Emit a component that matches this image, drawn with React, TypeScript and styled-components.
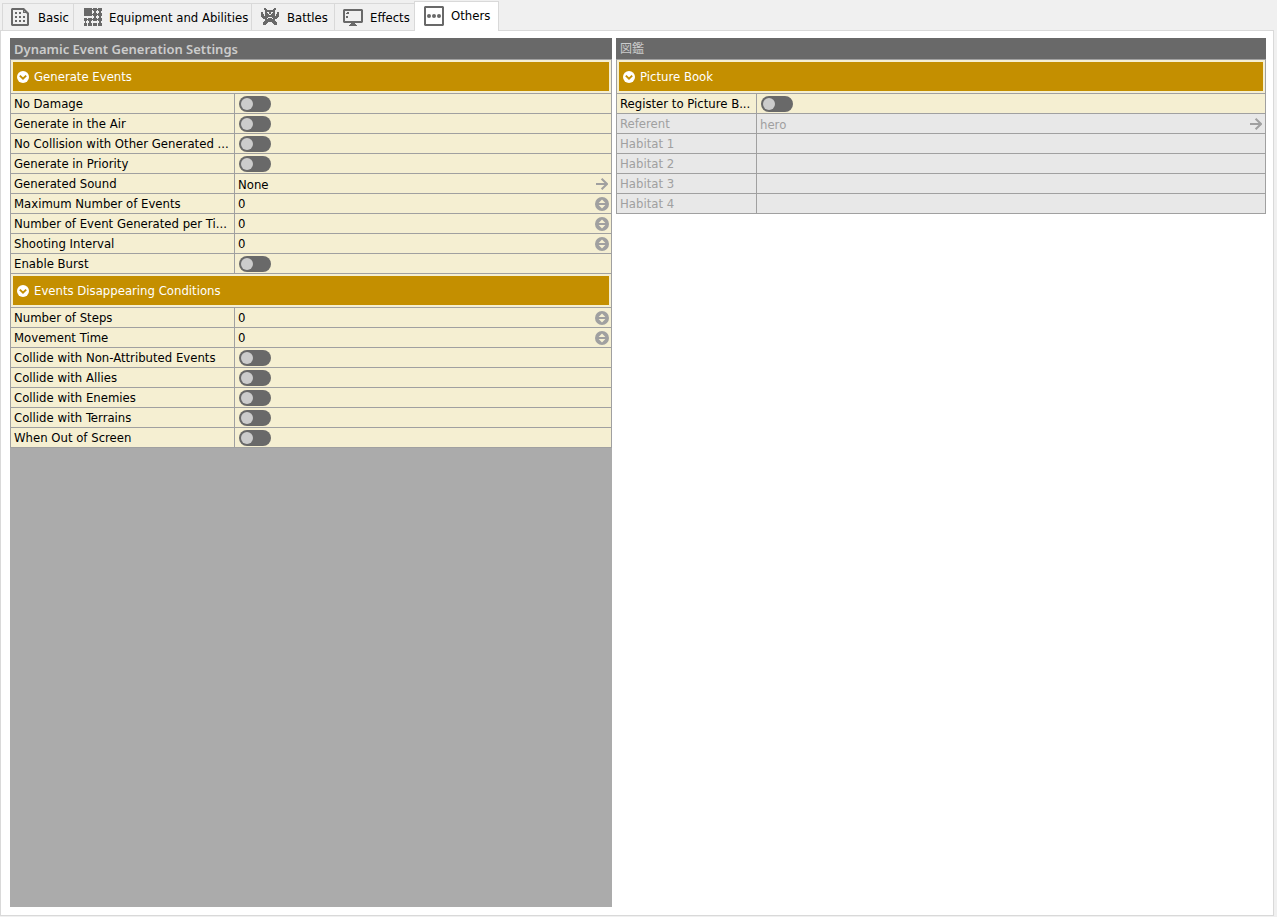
import React from "react";
import styled, { createGlobalStyle, css } from "styled-components";

const color = {
  chrome: "#f0f0f0",
  edge: "#d9d9d9",
  dark: "#696969",
  line: "#a0a0a0",
  cream: "#f5efd2",
  gold: "#c48f00",
  knob: "#cccccc",
  off: "#e8e8e8",
  empty: "#ababab",
};

const GlobalStyle = createGlobalStyle`
  * { box-sizing: border-box; }
  body {
    margin: 0;
    background: ${color.chrome};
    color: #000;
    font: 13px/19px "DejaVu Sans Condensed", "Noto Sans CJK JP", sans-serif;
  }
  button, input { font: inherit; color: inherit; }
`;

const Page = styled.div`
  display: flex;
  flex-direction: column;
  min-height: 100vh;
  padding: 0 3px 1px 0;
`;

const TabStrip = styled.div`
  display: flex;
  align-items: flex-end;
  height: 30px;
  padding-left: 2px;
`;

const Tab = styled.button<{ $width: number; $active?: boolean }>`
  display: flex;
  align-items: center;
  gap: 7px;
  flex: none;
  width: ${(p) => p.$width}px;
  height: 27px;
  padding: 0 0 0 8px;
  border: 1px solid ${color.edge};
  border-width: 1px 0 0 1px;
  background: ${color.chrome};
  white-space: nowrap;
  ${(p) =>
    p.$active &&
    css`
      position: relative;
      z-index: 1;
      height: 30px;
      margin-bottom: -1px;
      padding: 0 0 2px 9px;
      border-width: 1px 1px 0 1px;
      background: #fff;
    `}
`;

const TabIcon = styled.svg`
  flex: none;
  width: 20px;
  height: 20px;
  fill: ${color.dark};
`;

const Panel = styled.main`
  flex: 1;
  display: grid;
  grid-template-columns: 602fr 650fr;
  gap: 4px;
  padding: 7px 7px 8px 9px;
  border: 1px solid ${color.edge};
  background: #fff;
`;

const Group = styled.section<{ $filled?: boolean }>`
  min-width: 0;
  background: ${(p) => (p.$filled ? color.empty : "#fff")};
`;

const GroupTitle = styled.h2`
  height: 21px;
  margin: 0;
  padding: 0 4px;
  overflow: hidden;
  background: ${color.dark};
  color: ${color.knob};
  font: 600 13px/22px "Noto Sans", sans-serif;
  white-space: nowrap;

  &:lang(ja) {
    font: 400 12px/20px "Noto Sans CJK JP", sans-serif;
  }
`;

const Grid = styled.table`
  width: 100%;
  table-layout: fixed;
  border: 1px solid ${color.line};
  border-bottom: 0;
  border-spacing: 0;
  background: ${color.cream};
`;

const LabelCol = styled.col<{ $width: number }>`
  width: ${(p) => p.$width}px;
`;

const SectionCell = styled.th`
  padding: 2px;
  border-bottom: 1px solid ${color.line};
  font-weight: 400;
`;

const SectionButton = styled.button`
  display: flex;
  align-items: center;
  gap: 5px;
  width: 100%;
  height: 29px;
  padding: 0 4px;
  border: 0;
  background: ${color.gold};
  color: #fff;
`;

const Row = styled.tr<{ $disabled?: boolean }>`
  ${(p) =>
    p.$disabled &&
    css`
      background: ${color.off};
      color: ${color.line};
    `}
`;

const LabelCell = styled.th`
  height: 20px;
  padding: 0 3px;
  border: 1px solid ${color.line};
  border-width: 0 1px 1px 0;
  font-weight: 400;
  text-align: left;
  white-space: nowrap;
  overflow: hidden;
`;

const ValueCell = styled.td`
  height: 20px;
  padding: 0;
  border-bottom: 1px solid ${color.line};
`;

const Toggle = styled.input`
  appearance: none;
  display: block;
  width: 32px;
  height: 16px;
  margin: 1px 4px 0;
  padding: 2px;
  border-radius: 8px;
  background: ${color.dark};

  &::before {
    content: "";
    display: block;
    width: 12px;
    height: 12px;
    border-radius: 50%;
    background: ${color.knob};
  }
  &:checked::before {
    margin-left: 16px;
  }
`;

const LinkButton = styled.button`
  display: flex;
  align-items: center;
  justify-content: space-between;
  width: 100%;
  height: 19px;
  padding: 1px 3px 0;
  border: 0;
  background: none;
`;

const NumberBox = styled.div`
  display: flex;
  align-items: center;
  height: 19px;
  padding: 0 2px 0 3px;
`;

const NumberInput = styled.input`
  flex: 1;
  min-width: 0;
  height: 19px;
  padding: 0;
  border: 0;
  outline: 0;
  background: none;
`;

const StepButton = styled.button`
  display: flex;
  padding: 0;
  border: 0;
  background: none;
`;

const ChevronIcon = () => (
  <svg width="12" height="12" viewBox="0 0 12 12" aria-hidden="true">
    <circle cx="6" cy="6" r="6" fill="#fff" />
    <path d="M2.8 4.6 6 7.6 9.2 4.6" fill="none" stroke={color.gold} strokeWidth="1.9" />
  </svg>
);

const ArrowIcon = () => (
  <svg width="12" height="12" viewBox="0 0 12 12" fill="none" stroke={color.line} strokeWidth="2" aria-hidden="true">
    <path d="M0 6h11M5.6.7 11 6 5.6 11.3" />
  </svg>
);

const StepIcon = () => (
  <svg width="14" height="14" viewBox="0 0 14 14" aria-hidden="true">
    <circle cx="7" cy="7" r="7" fill={color.line} />
    <path d="M7 2.4 10.4 6H3.6ZM7 11.6 10.4 8H3.6Z" fill={color.cream} />
  </svg>
);

const monster = [
  "...##........##...",
  "...###......###...",
  "....##########....",
  "....##########....",
  "##..##..##..##..##",
  "##..###.##.###..##",
  "###.####..####.###",
  "###.##########.###",
  "##################",
  ".######....######.",
  "..####.####.####..",
  "....##########....",
  "....##########....",
  "...############...",
  "..#####....#####..",
  "..####......####..",
  "..###........###..",
];

const monsterPath = monster
  .flatMap((line, y) => [...line].map((c, x) => (c === "#" ? `M${x + 1} ${y + 1}h1v1h-1z` : "")))
  .join("");

const tabs = [
  {
    name: "Basic",
    width: 71,
    icon: (
      <>
        <path fillRule="evenodd" d="M1 1h12l5 5v12l-1 1H1l-1-1V2ZM2 3v14h14V7l-4-4Z" />
        <path d="M12 2h1v3h4v1h-5z" />
        <path d="M4 5h2v2H4zM8 5h2v2H8zM4 9h2v2H4zM8 9h2v2H8zM12 9h2v2h-2zM4 13h2v2H4zM8 13h2v2H8zM12 13h2v2h-2z" />
      </>
    ),
  },
  {
    name: "Equipment and Abilities",
    width: 178,
    icon: (
      <path d="M2 1h8v8H2zM11 1h4v3h-4zM16 1h4v3h-4zM11 6h4v3h-4zM16 6h4v3h-4zM2 11h3v3H2zM6 11h4v3H6zM11 11h4v3h-4zM16 11h4v3h-4zM2 16h3v3H2zM6 16h4v3H6zM11 16h4v3h-4zM16 16h4v3h-4zM10 2h6v1h-6zM10 7h6v1h-6zM4 12h12v1H4zM12 4h2v2h-2zM17 4h2v2h-2zM12 9h2v2h-2zM17 9h2v2h-2zM3 14h1v2H3zM7 14h2v2H7zM17 14h2v2h-2z" />
    ),
  },
  { name: "Battles", width: 83, icon: <path d={monsterPath} shapeRendering="crispEdges" /> },
  {
    name: "Effects",
    width: 80,
    icon: (
      <>
        <path fillRule="evenodd" d="M1 2h18l1 1v12l-1 1h-7v1h1v1h1v1H6v-1h1v-1h1v-1H1l-1-1V3ZM2 4v10h16V4Z" />
        <path d="M4 5h2v2H4zM3 6h2v1H3zM3 9h2v2H3z" />
      </>
    ),
  },
  {
    name: "Others",
    width: 85,
    icon: (
      <>
        <path fillRule="evenodd" d="M1 0h18l1 1v18l-1 1H1l-1-1V1ZM2 2v16h16V2Z" />
        <circle cx="5" cy="10" r="2" />
        <circle cx="10" cy="10" r="2" />
        <circle cx="15" cy="10" r="2" />
      </>
    ),
  },
];

type Kind = "toggle" | "number" | "link" | "empty";
type Property = { label: string; kind: Kind; value?: string; disabled?: boolean };
type Section = { title: string; rows: Property[] };

const toggle = (label: string): Property => ({ label, kind: "toggle" });
const number = (label: string): Property => ({ label, kind: "number", value: "0" });
const habitat = (n: number): Property => ({ label: `Habitat ${n}`, kind: "empty", disabled: true });

const eventSections: Section[] = [
  {
    title: "Generate Events",
    rows: [
      toggle("No Damage"),
      toggle("Generate in the Air"),
      toggle("No Collision with Other Generated ..."),
      toggle("Generate in Priority"),
      { label: "Generated Sound", kind: "link", value: "None" },
      number("Maximum Number of Events"),
      number("Number of Event Generated per Ti..."),
      number("Shooting Interval"),
      toggle("Enable Burst"),
    ],
  },
  {
    title: "Events Disappearing Conditions",
    rows: [
      number("Number of Steps"),
      number("Movement Time"),
      toggle("Collide with Non-Attributed Events"),
      toggle("Collide with Allies"),
      toggle("Collide with Enemies"),
      toggle("Collide with Terrains"),
      toggle("When Out of Screen"),
    ],
  },
];

const bookSections: Section[] = [
  {
    title: "Picture Book",
    rows: [
      toggle("Register to Picture B..."),
      { label: "Referent", kind: "link", value: "hero", disabled: true },
      habitat(1),
      habitat(2),
      habitat(3),
      habitat(4),
    ],
  },
];

function Value({ id, row }: { id: string; row: Property }) {
  switch (row.kind) {
    case "toggle":
      return <Toggle id={id} type="checkbox" role="switch" />;
    case "number":
      return (
        <NumberBox>
          <NumberInput id={id} type="text" inputMode="numeric" defaultValue={row.value} />
          <StepButton type="button" aria-label={`Adjust ${row.label}`}>
            <StepIcon />
          </StepButton>
        </NumberBox>
      );
    case "link":
      return (
        <LinkButton id={id} type="button" disabled={row.disabled}>
          {row.value}
          <ArrowIcon />
        </LinkButton>
      );
    default:
      return null;
  }
}

function PropertyTable({ name, sections, labelWidth }: { name: string; sections: Section[]; labelWidth: number }) {
  return (
    <Grid>
      <colgroup>
        <LabelCol $width={labelWidth} />
        <col />
      </colgroup>
      {sections.map((section, s) => (
        <tbody key={section.title}>
          <tr>
            <SectionCell colSpan={2}>
              <SectionButton type="button" aria-expanded="true">
                <ChevronIcon />
                {section.title}
              </SectionButton>
            </SectionCell>
          </tr>
          {section.rows.map((row, r) => {
            const id = `${name}-${s}-${r}`;
            return (
              <Row key={row.label} $disabled={row.disabled}>
                <LabelCell scope="row">
                  {row.kind === "empty" ? row.label : <label htmlFor={id}>{row.label}</label>}
                </LabelCell>
                <ValueCell>
                  <Value id={id} row={row} />
                </ValueCell>
              </Row>
            );
          })}
        </tbody>
      ))}
    </Grid>
  );
}

export default function App() {
  return (
    <>
      <GlobalStyle />
      <Page>
        <TabStrip role="tablist">
          {tabs.map((tab) => (
            <Tab
              key={tab.name}
              type="button"
              role="tab"
              aria-selected={tab.name === "Others"}
              $width={tab.width}
              $active={tab.name === "Others"}
            >
              <TabIcon viewBox="0 0 20 20" aria-hidden="true">
                {tab.icon}
              </TabIcon>
              {tab.name}
            </Tab>
          ))}
        </TabStrip>
        <Panel>
          <Group $filled>
            <GroupTitle>Dynamic Event Generation Settings</GroupTitle>
            <PropertyTable name="events" sections={eventSections} labelWidth={224} />
          </Group>
          <Group>
            <GroupTitle lang="ja">図鑑</GroupTitle>
            <PropertyTable name="book" sections={bookSections} labelWidth={140} />
          </Group>
        </Panel>
      </Page>
    </>
  );
}
